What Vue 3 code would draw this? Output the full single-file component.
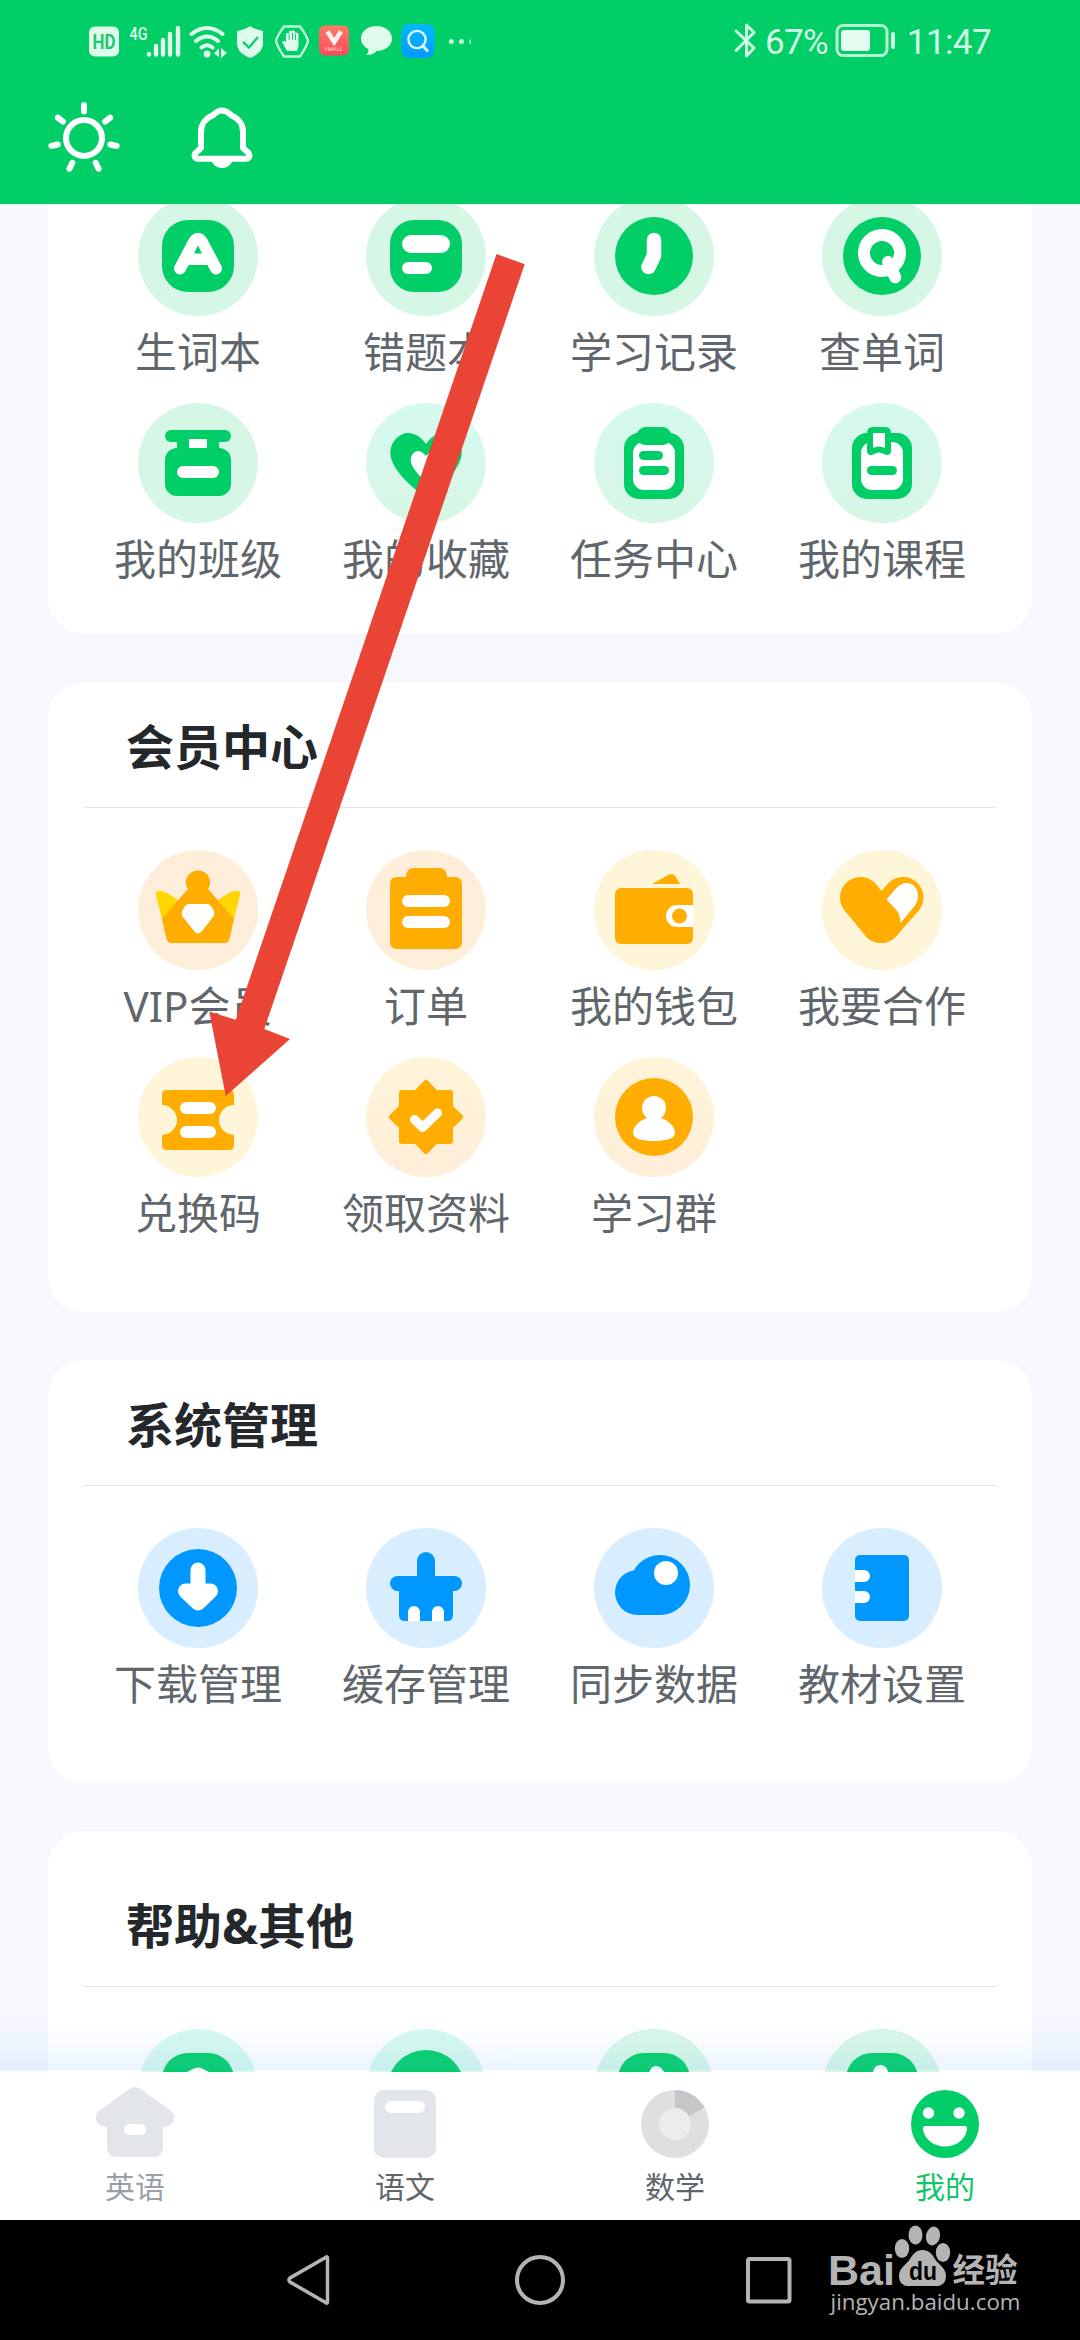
<script setup>
const G = '#01ce66'
const O = '#ffae01'
const B = '#0098ff'
const W = '#fff'

const rect = (x, y, w, h, r, fill) => `<rect x="${x}" y="${y}" width="${w}" height="${h}" rx="${r}" fill="${fill}"/>`
const disc = (x, y, r, fill) => `<circle cx="${x}" cy="${y}" r="${r}" fill="${fill}"/>`
const path = (d, fill) => `<path d="${d}" fill="${fill}"/>`
const line = (d, color, width) =>
  `<path d="${d}" fill="none" stroke="${color}" stroke-width="${width}" stroke-linecap="round" stroke-linejoin="round"/>`

const icons = {
  words: rect(24, 24, 72, 72, 26, G) + line('M42 72.5L56 46Q60 39.5 64 46L78 72.5', W, 12) +
    path('M56 42H64L74 69H46Z', W) + path('M60 49.5L64 57.5H56Z', G),
  mistakes: rect(24, 24, 72, 72, 24, G) + rect(36, 39, 48, 18, 9, W) + rect(36, 66, 30, 12, 6, W),
  history: disc(60, 60, 39, G) + line('M60 44V59.5L54.5 71', W, 14.5),
  search: disc(60, 60, 39, G) + '<circle cx="60" cy="57" r="18" fill="none" stroke="#fff" stroke-width="12"/>' +
    line('M66 66L73.3 81.3', W, 12),
  klass: rect(27, 27, 66, 12, 6, G) + path('M39 36H81V46H39Z', G) + rect(27, 45, 66, 48, 12, G) +
    rect(51, 36, 18, 9, 0, W) + rect(39, 63, 42, 12, 6, W),
  heart: path('M60 41C52 30 42 28 35 32C25 37 22 49 26 58C31 71 44 82 56 92Q60 95 64 92C76 82 89 71 94 58C98 49 95 37 85 32C78 28 68 30 60 41Z', G) +
    path('M60 53C56 48 52 47 49 49C44 52 44 58 46 62C49 69 55 74 60 78C65 74 71 69 74 62C76 58 76 52 71 49C68 47 64 48 60 53Z', W),
  tasks: rect(30, 30, 60, 66, 15, G) + rect(39, 39, 42, 48, 11, W) +
    path('M43 30C45 26 49 24 52 24H68C72 24 75 26 77 30L80 38L74 40C72 41 71 42 69 42H51C49 42 47 41 46 40L40 38Z', G) +
    rect(45, 48, 24, 9, 4.5, G) + rect(45, 63, 30, 9, 4.5, G),
  course: rect(30, 30, 60, 66, 15, G) + rect(39, 39, 42, 48, 11, W) +
    path('M45 30Q45 24 51 24H63Q69 24 69 30V48C69 52 65 53 62 51Q57 48 52 51C49 53 45 52 45 48Z', G) +
    path('M51 30H63V45Q57 42 51 45Z', W) + rect(45, 63, 30, 9, 4.5, G),
  vip: path('M24 69L18 45Q17 40 23 41Q30 42 42 52L50 60Z', '#ffd600') + path('M96 69L102 45Q103 40 97 41Q90 42 78 52L70 60Z', '#ffd600') +
    disc(60, 32.5, 12, O) + path('M49 40L52 38H68L71 40L96 69L91.5 89Q90 93 87 93H33Q30 93 28.5 89L24 69Z', O) +
    path('M51 54H69Q71 54 73 56L76 61Q77 65 75 67L64 81Q60 86 56 81L45 67Q43 65 44 61L47 56Q49 54 51 54Z', W),
  orders: path('M40 27Q40 18 48 18H73Q81 18 81 27H89Q96 27 96 34V92Q96 99 89 99H31Q24 99 24 92V34Q24 27 31 27Z', O) +
    rect(36, 45, 48, 12, 6, W) + rect(36, 66, 48, 12, 6, W),
  wallet: path('M58 34L75 24.5Q79 23 82 27L86 34Z', O) + rect(21, 38, 78, 56, 6, O) +
    path('M99 55H83A11 11 0 0 0 83 77H99Z', W) + disc(85.5, 66, 7.5, O),
  partner: line('M81 47.5L59 72.5', O, 41) + line('M38.5 47.5L59 72.5', O, 41) +
    path('M64.5 49.5L73.5 39C80 31 89 31.5 93.5 37.5C97 42 97 50 93 55.5L78.5 73C78.5 67 77 63 73 58.5Z', W),
  ticket: path('M29 33H91Q96 33 96 38V48A15 15 0 0 0 96 78V88Q96 93 91 93H29Q24 93 24 88V78A15 15 0 0 0 24 48V38Q24 33 29 33Z', O) +
    rect(42, 45, 36, 12, 6, W) + rect(42, 69, 36, 12, 6, W),
  badge: `<path d="M60 26L69.5 36H84V50.5L94 60L84 69.500V84H69.500L60 94L50.5 84H36V69.5L26 60L36 50.5V36H50.5Z" fill="${O}" stroke="${O}" stroke-width="6" stroke-linejoin="round"/>` +
    line('M48.5 62.5L56.5 70.5L71.5 56', W, 9),
  group: disc(60, 60, 39, O) + disc(60, 51, 12, W) +
    path('M60 60C71 60 81 68 81 76C81 82 71 84 60 84S39 82 39 76C39 68 49 60 60 60Z', W) + path('M54 60H66V66H54Z', W),
  download: disc(60, 60, 39, B) + line('M60 42V68', W, 15) +
    `<path d="M47.5 63L60 75L72.5 63Z" fill="${W}" stroke="${W}" stroke-width="15" stroke-linejoin="round"/>`,
  clean: path('M51 33A9 9 0 0 1 69 33V50H51Z', B) + rect(24, 48, 72, 15, 7.5, B) + path('M33 56H87V87Q87 93 81 93H39Q33 93 33 87Z', B) +
    path('M42 93V84A6 6 0 0 1 54 84V93Z', W) + path('M66 93V84A6 6 0 0 1 78 84V93Z', W),
  cloud: disc(66, 57, 30, B) + path('M43.5 42A22.5 22.5 0 0 0 43.5 87H66V42Z', B) + disc(72, 45, 12, W),
  book: rect(33, 27, 54, 66, 5, B) + path('M33 42H42A6 6 0 0 1 42 54H33Z', W) + path('M33 63H42A6 6 0 0 1 42 75H33Z', W),
  share: rect(24, 24, 72, 72, 26, G) + path('M49 43L57 39Q60 38 63 39L71 43V56H49Z', W),
  round: disc(60, 60, 39, G),
  help: rect(24, 24, 72, 72, 26, G) + path('M55 48V44Q57 37 62 37Q65 37 67 39L74 48Z', W),
  about: rect(24, 24, 72, 72, 26, G) + disc(58.5, 43.5, 7.5, W),
}

const sections = [
  {
    key: 'study',
    items: [
      { label: '生词本', icon: 'words', tint: 'green' },
      { label: '错题本', icon: 'mistakes', tint: 'green' },
      { label: '学习记录', icon: 'history', tint: 'green' },
      { label: '查单词', icon: 'search', tint: 'green' },
      { label: '我的班级', icon: 'klass', tint: 'green' },
      { label: '我的收藏', icon: 'heart', tint: 'mint' },
      { label: '任务中心', icon: 'tasks', tint: 'mint' },
      { label: '我的课程', icon: 'course', tint: 'mint' },
    ],
  },
  {
    key: 'member',
    title: '会员中心',
    items: [
      { label: 'VIP会员', icon: 'vip', tint: 'peach' },
      { label: '订单', icon: 'orders', tint: 'peach' },
      { label: '我的钱包', icon: 'wallet', tint: 'cream' },
      { label: '我要合作', icon: 'partner', tint: 'cream' },
      { label: '兑换码', icon: 'ticket', tint: 'cream' },
      { label: '领取资料', icon: 'badge', tint: 'sunset' },
      { label: '学习群', icon: 'group', tint: 'sunset' },
    ],
  },
  {
    key: 'system',
    title: '系统管理',
    items: [
      { label: '下载管理', icon: 'download', tint: 'blue' },
      { label: '缓存管理', icon: 'clean', tint: 'blue' },
      { label: '同步数据', icon: 'cloud', tint: 'blue' },
      { label: '教材设置', icon: 'book', tint: 'blue' },
    ],
  },
  {
    key: 'help',
    title: '帮助&其他',
    items: [
      { label: '', icon: 'share', tint: 'mint' },
      { label: '', icon: 'round', tint: 'mint' },
      { label: '', icon: 'help', tint: 'green' },
      { label: '', icon: 'about', tint: 'green' },
    ],
  },
]

const tabs = [
  {
    label: '英语', state: 'dim',
    icon: path('M34.5 4Q40 0 45.5 4L75 25C83 31 79 42 68 42V62Q68 72 58 72H22Q12 72 12 62V42C1 42 -3 31 5 25Z', '#e2e5ea') + rect(29, 39, 22, 11, 5.5, W),
  },
  { label: '语文', state: 'normal', icon: rect(9, 5, 62, 68, 10, '#e2e5ea') + rect(20, 16, 40, 12, 6, W) },
  {
    label: '数学', state: 'normal',
    icon: disc(40, 39, 34, '#dedfe1') + path('M40 39V5A34 34 0 0 1 69.5 22.5Z', '#c5c8cb') + disc(40, 39, 16, '#ebecee'),
  },
  {
    label: '我的', state: 'active',
    icon: disc(40, 39, 34, G) + disc(23.5, 28, 5.7, W) + disc(54, 28, 5.7, W) +
      path('M20 41H60Q62.5 41 62 45C60 55 51 61.5 40 61.5S20 55 18 45Q17.5 41 20 41Z', W),
  },
]
</script>

<template>
  <div class="screen">
    <header class="top">
      <div class="status">
        <div class="status-left">
          <svg width="30" height="32" viewBox="89 25 30 32">
            <rect x="89" y="26.5" width="30" height="30" rx="6" fill="#dffbec" />
            <text x="92.5" y="49" font-size="20" font-weight="700" textLength="23" lengthAdjust="spacingAndGlyphs" fill="#1fc871">HD</text>
          </svg>
          <svg class="signal" width="53" height="38" viewBox="128 21 53 38">
            <text x="129.5" y="39" font-size="18.5" font-weight="500" textLength="18" lengthAdjust="spacingAndGlyphs" fill="#dffbec">4G</text>
            <path d="M149 53.5V53M156 53.5V45M163 53.5V39M170 53.5V33M178 53.5V27" stroke="#dffbec" stroke-width="4.4" stroke-linecap="round" />
          </svg>
          <svg class="wifi" width="38" height="34" viewBox="189 23 38 34">
            <path d="M191.5 33Q207 21 222.5 33M196 40Q207 31 218 40M201.5 46.5Q207 42 212.5 46.5" fill="none" stroke="#dffbec" stroke-width="4" stroke-linecap="round" />
            <circle cx="207" cy="53" r="3.4" fill="#dffbec" />
            <path d="M214 52.5L219 47V56M221 47V57L227 52Z" fill="#dffbec" />
          </svg>
          <svg class="shield" width="28" height="34" viewBox="236 23 28 34">
            <path d="M250 25C254 28 259 29 263 30V42C263 50 257 54 250 57C243 54 237 50 237 42V30C241 29 246 28 250 25Z" fill="#dffbec" />
            <path d="M243 41L249 46.5L258 36" fill="none" stroke="#14cf70" stroke-width="2.5" />
          </svg>
          <svg class="hand" width="36" height="34" viewBox="274 24 36 34">
            <path d="M284 26.5H300Q307 36 308 41Q307 46 300 56.5H284Q277 46 276 41Q277 36 284 26.5Z" fill="none" stroke="#c3f6dc" stroke-width="2.3" stroke-linejoin="round" />
            <path d="M287 51L282 42L284.5 40.5L286 42V34Q287.5 32 289 34V31.5Q290.5 30 292 31.5V31Q293.5 29.5 295 31.5V33Q297 31.5 298.5 34V46L297 51Z" fill="#dffbec" />
            <path d="M289.2 34V40M292.5 33V40M295.5 34V40" stroke="#14cf70" stroke-width="1" />
          </svg>
          <svg class="vmall" width="30" height="32" viewBox="319 26 30 32">
            <defs><linearGradient id="red" x1="0" y1="0" x2="0" y2="1"><stop offset="0" stop-color="#fd7b66" /><stop offset="1" stop-color="#fb4a5a" /></linearGradient></defs>
            <rect x="319" y="26.5" width="30" height="30" rx="6" fill="url(#red)" />
            <path d="M327.5 32.500L334.200 43L341 32.500" fill="none" stroke="#fff0ee" stroke-width="4.5" />
            <text x="324" y="52" font-size="6" textLength="19" fill="#ffd5d3">VMALL</text>
          </svg>
          <svg class="bubble" width="32" height="32" viewBox="361 26 32 32">
            <path d="M376.5 27C385 27 392 32 392 39.5S385 52 376.5 52C374 55 370 56.5 366.5 56Q369 53.5 368.5 50C364 48 361 44 361 39.5C361 32 368 27 376.5 27Z" fill="#dffbec" />
          </svg>
          <svg class="find" width="34" height="35" viewBox="401 24 34 35">
            <defs><linearGradient id="sky" x1="0" y1="0" x2="0" y2="1"><stop offset="0" stop-color="#00b9ff" /><stop offset="1" stop-color="#009bff" /></linearGradient></defs>
            <rect x="401.5" y="24" width="33" height="34" rx="8" fill="url(#sky)" />
            <circle cx="417" cy="39.5" r="8.6" fill="none" stroke="#e4f7ff" stroke-width="2.4" />
            <path d="M422 45L428 51.5" stroke="#e4f7ff" stroke-width="2.8" />
          </svg>
          <svg class="more" width="24" height="8" viewBox="448 36 24 8">
            <circle cx="451.3" cy="40.5" r="2.5" fill="#c3f6dc" />
            <circle cx="461.5" cy="40.5" r="2.5" fill="#c3f6dc" />
            <path d="M469.5 38.5H471V43H469.5Z" fill="#c3f6dc" />
          </svg>
        </div>
        <div class="status-right">
          <svg width="24" height="38" viewBox="732 22 24 38">
            <path d="M735 31L753 48L745.5 56V25L753 32.5L735 50.5" fill="none" stroke="#cdf9e3" stroke-width="3" stroke-linejoin="round" stroke-linecap="round" />
          </svg>
          <span class="percent">67%</span>
          <svg class="battery" width="62" height="36" viewBox="834 23 62 36">
            <rect x="836" y="25.5" width="50" height="30" rx="6" fill="none" stroke="#b5f5d3" stroke-width="3" />
            <rect x="840" y="30" width="29" height="21" rx="3" fill="#e4fbef" />
            <path d="M892 34V47" stroke="#cdf9e3" stroke-width="4" stroke-linecap="round" />
          </svg>
          <span class="clock">11:47</span>
        </div>
      </div>
      <div class="tools">
        <svg width="76" height="76" viewBox="46 100 76 76" fill="none" stroke="#fff" stroke-width="6" stroke-linecap="round">
          <circle cx="84" cy="138" r="18" />
          <path v-for="n in 7" :key="n" d="M84 111.5V105" :transform="`rotate(${(n - 1) * 51.43} 84 138.5)`" />
        </svg>
        <svg width="64" height="64" viewBox="190 106 64 64">
          <path d="M201 148V132C201 124 206 118 212.5 115.5C216 113 217 110.5 222 110.5S228 113 231.5 115.5C238 118 243 124 243 132V148L248.5 153C250.5 156 249 158.8 246 158.8H198C195 158.8 193.5 156 195.5 153Z" fill="none" stroke="#fff" stroke-width="6" stroke-linejoin="round" />
          <path d="M211 160H233C231 165 227 168 222 168S213 165 211 160Z" fill="#fff" />
        </svg>
      </div>
    </header>

    <main class="content">
      <section v-for="s in sections" :key="s.key" class="card" :class="s.key">
        <h2 v-if="s.title">{{ s.title }}</h2>
        <div class="grid">
          <div v-for="item in s.items" :key="item.icon" class="item">
            <svg class="icon" :class="item.tint" viewBox="0 0 120 120" v-html="icons[item.icon]"></svg>
            <span class="label">{{ item.label }}</span>
          </div>
        </div>
      </section>
      <div class="fade"></div>
    </main>

    <nav class="tabs">
      <div v-for="t in tabs" :key="t.label" class="tab" :class="t.state">
        <svg width="80" height="76" viewBox="0 0 80 76" v-html="t.icon"></svg>
        <span>{{ t.label }}</span>
      </div>
    </nav>

    <footer class="system-bar">
      <svg width="50" height="60" viewBox="285 2250 50 60"><path d="M327.5 2258V2302Q327.5 2304 325.5 2302.5L290 2282Q288 2280 290 2278L325.5 2257.5Q327.5 2256 327.5 2258Z" fill="none" stroke="#b4b4b4" stroke-width="3.5" /></svg>
      <svg width="60" height="60" viewBox="510 2250 60 60"><circle cx="540" cy="2280" r="23" fill="none" stroke="#b4b4b4" stroke-width="4" /></svg>
      <svg width="50" height="60" viewBox="744 2250 50 60"><rect x="748" y="2259" width="41.5" height="42.5" rx="1.5" fill="none" stroke="#b4b4b4" stroke-width="4" /></svg>
    </footer>

    <svg class="watermark" width="220" height="115" viewBox="0 0 220 115" fill="#b4b4b4">
      <text x="13" y="70" class="bai" font-size="43" textLength="67" lengthAdjust="spacingAndGlyphs">Bai</text>
      <ellipse cx="87" cy="33.5" rx="7.2" ry="9.5" />
      <ellipse cx="100.5" cy="20" rx="7" ry="9.5" />
      <ellipse cx="118" cy="21" rx="7" ry="9.5" transform="rotate(12 118 21)" />
      <ellipse cx="128" cy="37.5" rx="7.2" ry="9.5" />
      <path d="M107.5 35C114 35 117 39 120 44C124 50 131 53 131 61C131 68 127 71.5 119 71H96C88 71.5 84 68 84 61C84 53 91 50 95 44C98 39 101 35 107.5 35Z" />
      <text x="94" y="65" class="bai" fill="#000" font-size="25" textLength="28" lengthAdjust="spacingAndGlyphs">du</text>
      <text x="137.5" y="66.5" class="jy" font-size="32.5" textLength="65" lengthAdjust="spacingAndGlyphs">经验</text>
      <text x="15.5" y="95" class="url" font-size="22.5" textLength="190" lengthAdjust="spacingAndGlyphs">jingyan.baidu.com</text>
    </svg>

    <svg class="pointer" width="320" height="846" viewBox="207 252 320 846">
      <path d="M496.5 254L524.7 264.3L264.3 1029L290 1039L225.7 1096L209.3 1011.6L235.7 1019.8Z" fill="#e94436" />
    </svg>
  </div>
</template>

<style>
body {
  margin: 0;
}
</style>

<style scoped>
.screen {
  position: relative;
  display: flex;
  flex-direction: column;
  width: 1080px;
  height: 2340px;
  overflow: hidden;
  background: #f6f8fd;
  font-family: "Noto Sans", "Noto Sans CJK SC", sans-serif;
}
svg {
  display: block;
  flex: none;
}
.top {
  flex: none;
  height: 204px;
  background: #01ce66;
  font-family: Roboto, sans-serif;
}
.status {
  display: flex;
  justify-content: space-between;
  align-items: center;
  height: 82px;
  padding: 0 89px;
}
.status-left,
.status-right {
  display: flex;
  align-items: center;
}
.signal { margin-left: 9px; }
.wifi { margin-left: 8px; }
.shield { margin-left: 9px; }
.hand { margin-left: 10px; }
.vmall { margin-left: 9px; }
.bubble { margin-left: 12px; }
.find { margin-left: 8px; }
.more { margin-left: 13px; }
.percent,
.clock {
  padding-top: 3px;
  font-size: 35px;
  line-height: 40px;
  color: #d3fae6;
  white-space: nowrap;
}
.percent {
  margin-left: 8px;
  letter-spacing: -0.7px;
}
.battery { margin-left: 7px; }
.clock {
  margin-left: 10px;
  letter-spacing: -0.6px;
}
.tools {
  display: flex;
  align-items: center;
  gap: 68px;
  height: 76px;
  padding: 18px 0 0 46px;
}
.content {
  position: relative;
  flex: none;
  height: 1868px;
  overflow: hidden;
  display: flex;
  flex-direction: column;
  gap: 48px;
  padding: 0 48px;
  box-sizing: border-box;
}
.card {
  flex: none;
  padding: 0 36px 48px;
  border-radius: 36px;
  background: #fff;
}
.card.study {
  margin-top: -8px;
  padding-bottom: 24px;
  border-radius: 0 0 36px 36px;
}
.card.help {
  padding-top: 30px;
}
h2 {
  box-sizing: border-box;
  height: 126px;
  margin: 0 0 42px;
  padding: 2px 0 0 42px;
  border-bottom: 1px solid #e5e6e8;
  font-size: 48px;
  font-weight: 700;
  line-height: 126px;
  color: #24282b;
}
.grid {
  display: grid;
  grid-template-columns: repeat(4, 228px);
}
.item {
  display: flex;
  flex-direction: column;
  align-items: center;
  height: 207px;
}
.icon {
  width: 120px;
  height: 120px;
  border-radius: 50%;
}
.green { background: #d7f7e6; }
.mint { background: linear-gradient(#d6f9f0, #d7f7e4); }
.peach { background: #feeed9; }
.cream { background: #fff5d9; }
.sunset { background: linear-gradient(#fff5d9, #feedd9); }
.blue { background: #d8eeff; }
.label {
  margin-top: 9px;
  font-size: 42px;
  line-height: 54px;
  color: #5f676c;
  white-space: nowrap;
}
.fade {
  position: absolute;
  left: 0;
  right: 0;
  bottom: 2px;
  height: 52px;
  background: linear-gradient(rgba(120, 185, 250, 0), rgba(120, 185, 250, 0.05) 50%, rgba(110, 175, 250, 0.14));
}
.tabs {
  flex: none;
  display: flex;
  height: 148px;
  background: #fff;
}
.tab {
  flex: 1;
  display: flex;
  flex-direction: column;
  align-items: center;
  padding-top: 13px;
  font-size: 30px;
  line-height: 40px;
  color: #5f676c;
}
.tab span { margin-top: 6px; }
.tab.dim { color: #9aa1a6; }
.tab.active { color: #14c468; }
.system-bar {
  flex: none;
  display: flex;
  align-items: center;
  justify-content: space-between;
  height: 120px;
  padding: 0 286px 0 285px;
  box-sizing: border-box;
  background: #000;
}
.watermark {
  position: absolute;
  left: 815px;
  top: 2215px;
}
.bai {
  font-family: "Liberation Sans", sans-serif;
  font-weight: 700;
}
.jy {
  font-family: "Noto Sans CJK SC", sans-serif;
  font-weight: 700;
}
.url {
  font-family: "Open Sans", sans-serif;
}
.pointer {
  position: absolute;
  left: 207px;
  top: 252px;
}
</style>
